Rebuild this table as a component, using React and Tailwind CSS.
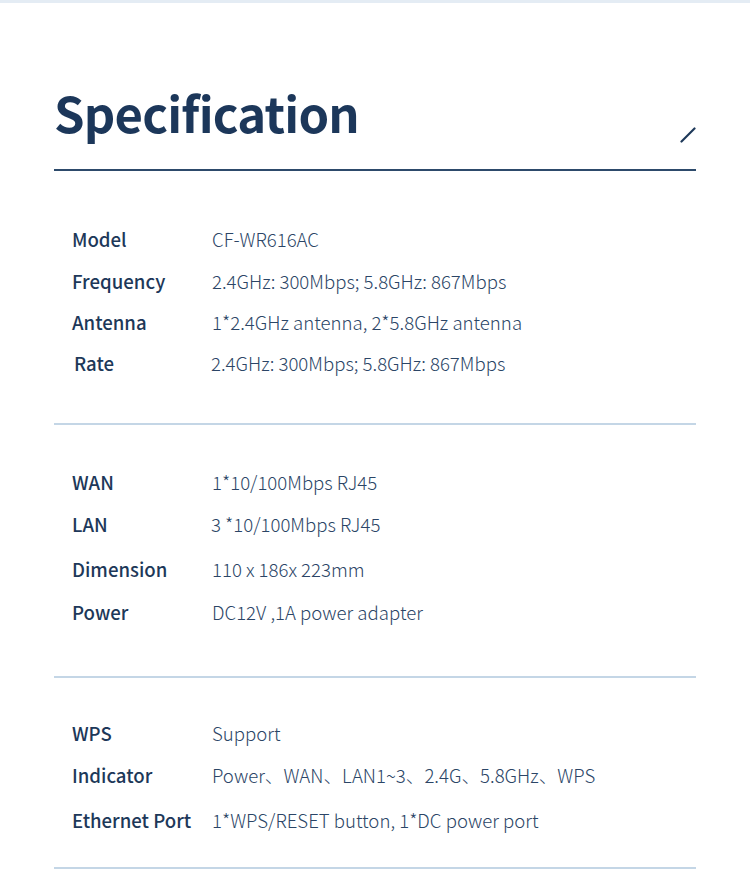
import React from 'react';

const FONT = { fontFamily: '"Noto Sans CJK SC", "Noto Sans", sans-serif' };

// spec groups, each row carries its own height to follow the source spacing
const GROUPS = [
  {
    pad: 'pt-[47px] pb-[39px]',
    rows: [
      { label: 'Model', value: 'CF-WR616AC', h: 'h-[42px]' },
      { label: 'Frequency', value: '2.4GHz: 300Mbps; 5.8GHz: 867Mbps', h: 'h-[42px]' },
      { label: 'Antenna', value: '1*2.4GHz antenna, 2*5.8GHz antenna', h: 'h-[40px]' },
      { label: 'Rate', value: '2.4GHz: 300Mbps; 5.8GHz: 867Mbps', h: 'h-[42px]', lx: 'pl-[20px]', vx: 'pl-[157px]' }
    ]
  },
  {
    pad: 'pt-[37px] pb-[44px]',
    rows: [
      { label: 'WAN', value: '1*10/100Mbps RJ45', h: 'h-[40px]' },
      { label: 'LAN', value: '3 *10/100Mbps RJ45', h: 'h-[44px]', vx: 'pl-[157px]' },
      { label: 'Dimension', value: '110 x 186x 223mm', h: 'h-[46px]' },
      { label: 'Power', value: 'DC12V ,1A power adapter', h: 'h-[40px]' }
    ]
  },
  {
    pad: 'pt-[35px] pb-[24px]',
    rows: [
      { label: 'WPS', value: 'Support', h: 'h-[40px]' },
      { label: 'Indicator', value: 'Power、WAN、LAN1~3、2.4G、5.8GHz、WPS', h: 'h-[44px]' },
      { label: 'Ethernet Port', value: '1*WPS/RESET button, 1*DC power port', h: 'h-[46px]' }
    ]
  }
];

const SpecRow = ({ row }) => (
  <div className={`relative flex items-center ${row.h}`}>
    <span className={`absolute left-0 ${row.lx || 'pl-[18px]'} text-[18.6px] font-medium text-[#1d3859]`}>
      {row.label}
    </span>
    <span className={`absolute left-0 ${row.vx || 'pl-[158px]'} text-[18.6px] font-light text-[#2b4566]`}>
      {row.value}
    </span>
  </div>
);

export default function App() {
  return (
    <div className="w-[750px] h-[870px] bg-white border-t-[3px] border-[#e4ecf4] overflow-hidden" style={FONT}>
      <div className="px-[54px]">
        {/* heading */}
        <div className="relative pt-[78px] pb-[26px] border-b-2 border-[#2d4a6b]">
          <h1 className="text-[49px] leading-[62px] font-bold text-[#1c375a] tracking-[-0.8px]">Specification</h1>
          <svg className="absolute right-0 bottom-[26px]" width="16" height="16" viewBox="0 0 16 16">
            <line x1="1.5" y1="14.5" x2="14.5" y2="1.5" stroke="#1d3859" strokeWidth="2.2" strokeLinecap="round" />
          </svg>
        </div>

        {GROUPS.map((g, i) => (
          <div key={i} className={`border-b-2 border-[#c4d6e6] ${g.pad}`}>
            {g.rows.map((r) => (
              <SpecRow key={r.label} row={r} />
            ))}
          </div>
        ))}
      </div>
    </div>
  );
}
